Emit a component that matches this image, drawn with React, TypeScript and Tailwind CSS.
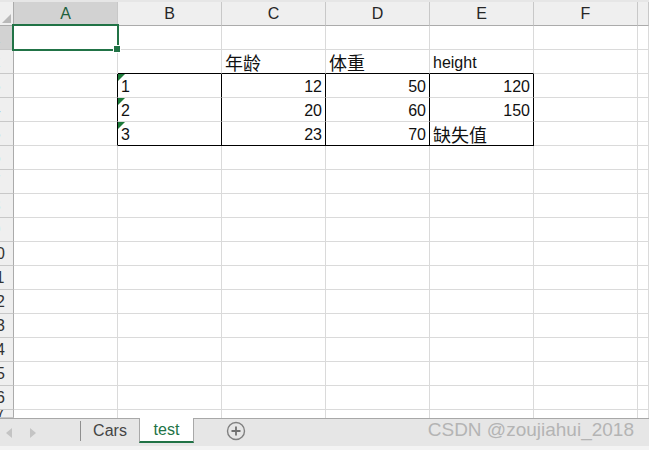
import React from "react";

const COLS = ["A", "B", "C", "D", "E", "F", "G"];
const COL_W = [104, 104, 104, 104, 104, 104, 11];

type Cell = { v: string; align?: "left" | "right"; cjk?: boolean; flag?: boolean };

// sheet data, keyed by row then column letter
const DATA: Record<number, Record<string, Cell>> = {
  2: {
    C: { v: "年龄", cjk: true },
    D: { v: "体重", cjk: true },
    E: { v: "height" },
  },
  3: {
    B: { v: "1", flag: true },
    C: { v: "12", align: "right" },
    D: { v: "50", align: "right" },
    E: { v: "120", align: "right" },
  },
  4: {
    B: { v: "2", flag: true },
    C: { v: "20", align: "right" },
    D: { v: "60", align: "right" },
    E: { v: "150", align: "right" },
  },
  5: {
    B: { v: "3", flag: true },
    C: { v: "23", align: "right" },
    D: { v: "70", align: "right" },
    E: { v: "缺失值", cjk: true },
  },
};

const TABLE_COLS = ["B", "C", "D", "E"];
const SANS = "font-['Liberation_Sans',Arial,sans-serif]";
const CJK = "font-['Noto_Sans_CJK_SC','Liberation_Sans',sans-serif]";

function GridCell({ row, col, width }: { row: number; col: string; width: number }) {
  const cell = DATA[row]?.[col];
  const inTable = row >= 3 && row <= 5;
  // black borders around the little table
  const blackRight = inTable && (col === "A" || TABLE_COLS.includes(col));
  const blackBottom =
    TABLE_COLS.includes(col) && (row === 2 || row === 5);

  return (
    <div
      style={{ width }}
      className={`relative h-full shrink-0 flex items-end pb-[2px] px-[3px] border-r border-b ${
        blackRight ? "border-r-black" : "border-r-[#dadada]"
      } ${blackBottom ? "border-b-black" : "border-b-[#dadada]"} ${
        cell?.align === "right" ? "justify-end" : "justify-start"
      }`}
    >
      {cell?.flag && (
        <svg className="absolute left-0 top-0" width="7" height="7" viewBox="0 0 7 7">
          <polygon points="0,0 7,0 0,7" fill="#1d7a3a" />
        </svg>
      )}
      {cell && (
        <span
          className={`leading-none text-[#111] whitespace-nowrap ${
            cell.cjk ? `${CJK} text-[18px]` : `${SANS} text-[16px]`
          }`}
        >
          {cell.v}
        </span>
      )}
    </div>
  );
}

function RowHeader({ n, selected }: { n: number; selected?: boolean }) {
  return (
    <div
      className={`w-[14px] h-full shrink-0 overflow-hidden border-r border-b border-r-[#ababab] border-b-[#c8c8c8] ${
        selected ? "bg-[#d2d2d2]" : "bg-[#efefef]"
      }`}
    >
      <div className={`-ml-[20px] w-[32px] h-full flex items-center justify-center ${SANS} text-[16px] text-[#333]`}>
        {n}
      </div>
    </div>
  );
}

export default function App() {
  const rows = Array.from({ length: 16 }, (_, i) => i + 1);

  return (
    <div className="relative w-[649px] h-[450px] bg-white overflow-hidden flex flex-col">
      <div className="h-[2px] bg-[#e6e6e6] shrink-0" />

      {/* column headers */}
      <div className="flex h-[24px] shrink-0">
        <div className="relative w-[14px] h-full bg-[#efefef] border-r border-b border-[#ababab]">
          <svg className="absolute right-[2px] bottom-[2px]" width="9" height="9" viewBox="0 0 9 9">
            <polygon points="9,0 9,9 0,9" fill="#b8b8b8" />
          </svg>
        </div>
        {COLS.map((c, i) => (
          <div
            key={c}
            style={{ width: COL_W[i] }}
            className={`h-full shrink-0 flex items-center justify-center border-r border-b border-r-[#c8c8c8] border-b-[#ababab] ${SANS} text-[16px] ${
              c === "A" ? "bg-[#d2d2d2] text-[#1e5f3c]" : "bg-[#efefef] text-[#262626]"
            }`}
          >
            {c === "G" ? "" : c}
          </div>
        ))}
      </div>

      {/* rows */}
      {rows.map((r) => (
        <div key={r} className="flex h-[24px] shrink-0">
          <RowHeader n={r} selected={r === 1} />
          {COLS.map((c, i) => (
            <GridCell key={c} row={r} col={c} width={COL_W[i]} />
          ))}
        </div>
      ))}
      <div className="flex h-[8px] shrink-0">
        <RowHeader n={17} />
        {COLS.map((c, i) => (
          <div key={c} style={{ width: COL_W[i] }} className="h-full shrink-0 border-r border-[#dadada]" />
        ))}
      </div>

      {/* sheet tabs */}
      <div className="relative flex items-stretch h-[28px] shrink-0 bg-[#e6e6e6] border-t border-[#a8a8a8]">
        <div className="flex items-center gap-[16px] pl-[6px] w-[80px]">
          <svg width="7" height="10" viewBox="0 0 7 10">
            <polygon points="6,0 6,10 0,5" fill="#c4c4c4" />
          </svg>
          <svg width="7" height="10" viewBox="0 0 7 10">
            <polygon points="1,0 1,10 7,5" fill="#c4c4c4" />
          </svg>
        </div>
        <div className="w-px h-[20px] mt-[2px] bg-[#8f8f8f]" />
        <div className={`w-[58px] flex items-center justify-center pb-[3px] ${SANS} text-[16px] text-[#444]`}>Cars</div>
        <div className="w-[55px] -mt-px bg-white border-x border-[#a8a8a8] border-b-2 border-b-[#217346] h-[25px] flex items-center justify-center">
          <span className={`${SANS} text-[16px] text-[#217346]`}>test</span>
        </div>
        <div className="w-[83px] flex items-center justify-center pb-[3px]">
          <svg width="20" height="20" viewBox="0 0 20 20">
            <circle cx="10" cy="10" r="8.5" fill="none" stroke="#808080" strokeWidth="1.4" />
            <path d="M10 5.5v9M5.5 10h9" stroke="#707070" strokeWidth="1.8" />
          </svg>
        </div>
        <div className={`flex-1 flex items-center justify-end pr-[15px] pb-[4px] ${SANS} text-[19px] text-[#b4b4b4]`}>
          CSDN @zoujiahui_2018
        </div>
      </div>
      <div className="flex-1 bg-[#f3f3f3]" />

      {/* active cell selection on A1 */}
      <div className="absolute left-[12px] top-[24px] w-[107px] h-[27px] border-2 border-[#217346] pointer-events-none">
        <div className="absolute -right-[4px] -bottom-[4px] w-[6px] h-[6px] bg-[#217346] border border-white box-content" />
      </div>
    </div>
  );
}
